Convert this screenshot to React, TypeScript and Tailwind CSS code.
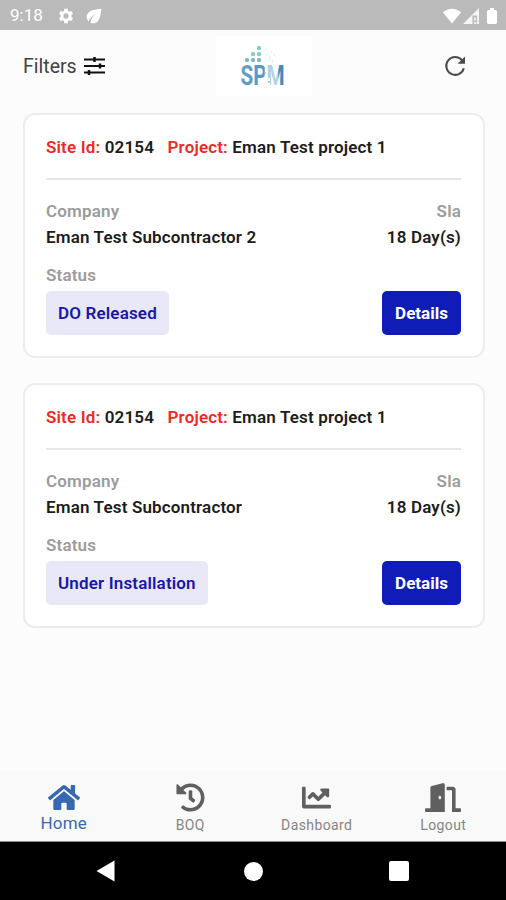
import React from 'react';
import { FaChartLine, FaDoorOpen, FaHistory, FaHome } from 'react-icons/fa';
import { MdEco, MdSettings } from 'react-icons/md';

const sites = [
  {
    siteId: "02154",
    project: "Eman Test project 1",
    company: "Eman Test Subcontractor 2",
    sla: "18 Day(s)",
    status: "DO Released"
  },
  {
    siteId: "02154",
    project: "Eman Test project 1",
    company: "Eman Test Subcontractor",
    sla: "18 Day(s)",
    status: "Under Installation"
  }
];

const tabs = [
  { label: "Home", icon: <FaHome className="w-8 h-[29px]" />, active: true },
  { label: "BOQ", icon: <FaHistory className="w-[29px] h-[29px]" />, active: false },
  { label: "Dashboard", icon: <FaChartLine className="w-[29px] h-[29px]" />, active: false },
  { label: "Logout", icon: <FaDoorOpen className="w-[36px] h-[29px]" />, active: false }
];

const StatusBar = () => (
  <div className="h-[30px] shrink-0 bg-[#bababa] flex items-center text-white pl-[10px] pr-[9px] pt-px">
    <span className="text-[17px] leading-none w-[47px]">9:18</span>
    <MdSettings className="w-[18px] h-[18px]" />
    <MdEco className="w-[22px] h-[22px] ml-[8px]" />
    <div className="ml-auto flex items-center">
      <svg className="w-[18px] h-[16px]" viewBox="0 0 19 16" fill="currentColor">
        <path d="M9.5 16 0 4.2C5.2-.8 13.8-.8 19 4.2z" />
      </svg>
      <svg className="w-[16px] h-[16px] ml-[2px]" viewBox="0 0 16 16">
        <path d="M0 16 16 0v7.5H9.5V16z" fill="white" fillOpacity=".85" />
        <path d="M12 9.5v3M15 7v9M11 15h2.4" stroke="white" strokeWidth="1.6" fill="none" />
      </svg>
      <svg className="w-[10px] h-[16px] ml-[8px]" viewBox="0 0 10 16" fill="currentColor">
        <path d="M3 0h4v2h2l1 1v12l-1 1H1l-1-1V3l1-1h2z" />
      </svg>
    </div>
  </div>
);

const Logo = () => (
  <div className="w-[96px] h-[60px] bg-white flex items-center justify-center">
    <svg className="w-[48px] h-[60px] overflow-visible" viewBox="0 -5 48 60">
      <defs>
        <linearGradient id="spm" x1="0" y1="0" x2="1" y2="0">
          <stop offset="0" stopColor="#629fc7" />
          <stop offset=".53" stopColor="#5796c6" />
          <stop offset=".56" stopColor="#a9cce2" />
          <stop offset=".84" stopColor="#b5d3e8" />
          <stop offset=".88" stopColor="#4a86b8" />
          <stop offset="1" stopColor="#4a86b8" />
        </linearGradient>
      </defs>
      <g fill="#85cdbb">
        <rect x="17" y="5" width="4" height="4" rx="1.5" />
        <rect x="11" y="11" width="4" height="4" rx="1.5" />
        <rect x="17" y="11" width="4" height="4" rx="1.5" />
      </g>
      <g fill="#79bac8">
        <rect x="5" y="17" width="4" height="4" rx="1.5" />
        <rect x="11" y="17" width="4" height="4" rx="1.5" />
        <rect x="17" y="17" width="4" height="4" rx="1.5" />
      </g>
      <path d="M25 7l3 3M26 13l8 8M31 10l4 5M29 18l4 4" stroke="#eaf1f3" strokeWidth="1.5" strokeDasharray="2 2" />
      <text
        x="0.5" y="44" fill="url(#spm)" fontSize="27" fontWeight="700"
        textLength="44" lengthAdjust="spacingAndGlyphs" fontFamily="Roboto, sans-serif"
      >
        SPM
      </text>
      <path d="M26 28v17M29 37v8" stroke="white" strokeWidth="2" strokeDasharray="3 2" />
    </svg>
  </div>
);

const Header = () => (
  <div className="h-[72px] shrink-0 flex items-center justify-between pl-[23px] pr-[39px]">
    <div className="flex items-center gap-[7px] w-[193px]">
      <span className="text-[19.5px] text-[#424242] pt-px">Filters</span>
      <svg className="w-[21px] h-[18px]" viewBox="0 0 21 18" stroke="#111" strokeWidth="2" fill="none">
        <path d="M0 2.5h21M0 9h21M0 15.5h21" />
        <path d="M10.5 0v5M16 6.5v5M5 13v5" strokeWidth="2.5" />
      </svg>
    </div>
    <Logo />
    <div className="w-[155px] flex justify-end">
      <svg className="w-[24px] h-[24px]" viewBox="0 0 24 24" fill="none" stroke="#4a4a4a" strokeWidth="2">
        <path d="M20.8 14.2A8.9 8.9 0 1 1 19 6.2l2 2.2" />
        <path d="M22 2.4v7.4h-7.4z" fill="#4a4a4a" stroke="none" />
      </svg>
    </div>
  </div>
);

const SiteCard = ({ site }: { site: typeof sites[number] }) => (
  <div className="h-[245px] rounded-[12px] border-2 border-[#ededed] bg-white px-[21.5px] text-[17px] font-semibold tracking-[0.16px] leading-5">
    <div className="h-[65px] pt-[22px] border-b-2 border-[#e6e6e6] whitespace-pre">
      <span className="text-[#ed2a25]">Site Id:</span>
      <span className="text-[#1c1c1c]"> {site.siteId}</span>
      <span className="text-[#ed2a25] ml-[13.5px]">Project:</span>
      <span className="text-[#1c1c1c]"> {site.project}</span>
    </div>
    <div className="pt-[21px] flex justify-between text-[#9c9c9c]">
      <span>Company</span>
      <span>Sla</span>
    </div>
    <div className="pt-[6px] flex justify-between text-[#1c1c1c]">
      <span>{site.company}</span>
      <span>{site.sla}</span>
    </div>
    <div className="pt-[18px] text-[#9c9c9c]">Status</div>
    <div className="mt-[6px] flex justify-between">
      <span className="h-[44px] px-3 rounded-[5px] bg-[#e8e8f8] text-[#1a16ac] flex items-center">{site.status}</span>
      <button className="h-[44px] w-[79px] rounded-[5px] bg-[#101cb8] text-white font-bold tracking-[0px]">
        Details
      </button>
    </div>
  </div>
);

const TabBar = () => (
  <div className="h-[71px] shrink-0 bg-[#f9f9f9] border-b border-[#8a8a8a] grid grid-cols-4">
    {tabs.map((tab) => (
      <div
        key={tab.label}
        className={`flex flex-col items-center pt-[11.5px] pl-px ${tab.active ? 'text-[#3968b2]' : 'text-[#5f5f5f]'}`}
      >
        {tab.icon}
        {tab.active ? (
          <span className="text-[17px] leading-5 tracking-[0.2px] mt-px">{tab.label}</span>
        ) : (
          <span className="text-[14px] leading-5 tracking-[0.4px] mt-[3px] text-[#858585]">{tab.label}</span>
        )}
      </div>
    ))}
  </div>
);

const SystemNav = () => (
  <div className="h-[58px] shrink-0 bg-black flex items-center justify-between pl-[96px] pr-[97px]">
    <svg className="w-[19px] h-[22px]" viewBox="0 0 19 22" fill="white">
      <path d="M18.5 .5v21L.5 11z" />
    </svg>
    <div className="w-[19px] h-[19px] ml-[2px] rounded-full bg-white" />
    <div className="w-[20px] h-[20px] rounded-[2px] bg-white" />
  </div>
);

const App = () => {
  return (
    <div className="w-full h-[900px] flex flex-col overflow-hidden bg-[#fcfcfc] font-['Roboto',sans-serif]">
      <StatusBar />
      <Header />
      <div className="flex-1 pt-[11px] pl-[22.5px] pr-[21.5px] flex flex-col gap-[25px]">
        {sites.map((site, index) => (
          <SiteCard key={index} site={site} />
        ))}
      </div>
      <TabBar />
      <SystemNav />
    </div>
  );
};

export default App;
